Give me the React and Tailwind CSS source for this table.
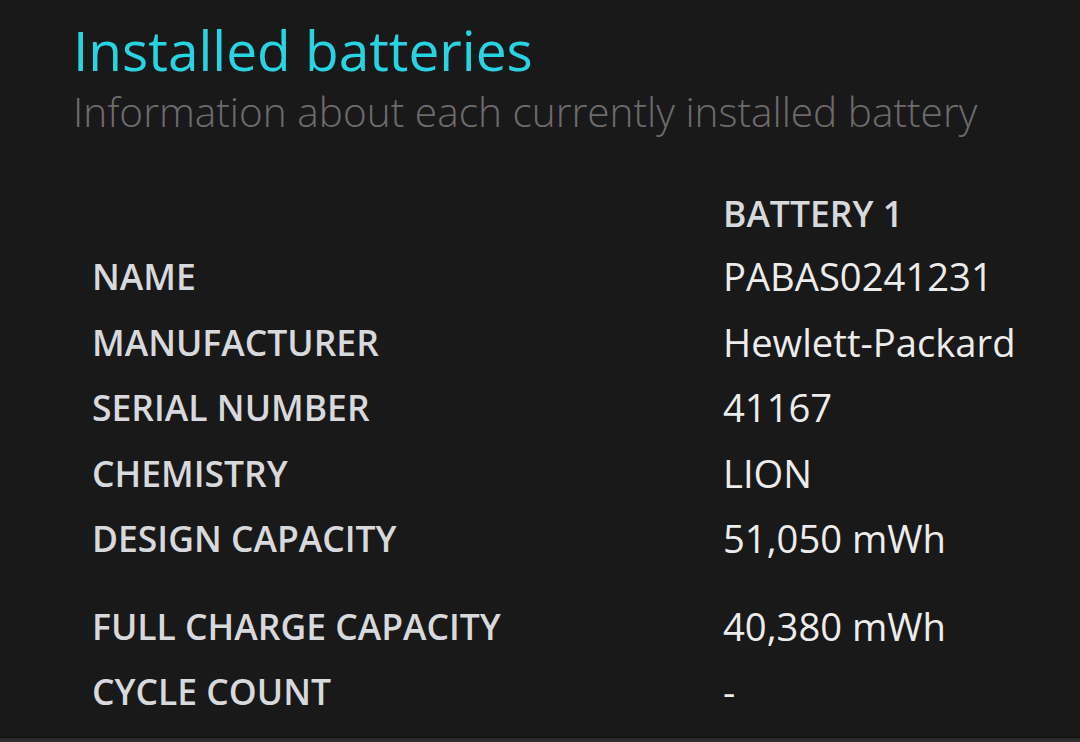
export default function App() {
  const rows = [
    ["NAME", "PABAS0241231", ""],
    ["MANUFACTURER", "Hewlett-Packard", ""],
    ["SERIAL NUMBER", "41167", ""],
    ["CHEMISTRY", "LION", ""],
    ["DESIGN CAPACITY", "51,050 mWh", ""],
    ["FULL CHARGE CAPACITY", "40,380 mWh", "mt-[22px]"],
    ["CYCLE COUNT", "-", ""],
  ];
  return (
    <div className="w-[1080px] h-[742px] bg-[#1a191a] overflow-hidden flex flex-col" style={{ fontFamily: '"Open Sans", "Noto Sans", sans-serif' }}>
      <div className="flex-1 pl-[73px] pt-[20px]">
        <h1 className="text-[55px] leading-[60px] text-[#28d4e2] font-medium whitespace-nowrap">Installed batteries</h1>
        <p className="text-[40.6px] leading-[50px] text-[#6c6c6c] font-light mt-[7px] whitespace-nowrap">Information about each currently installed battery</p>
        <div className="grid grid-cols-[631px_1fr] pl-[19px] mt-[45px]">
          <div></div>
          <div className="text-[35.5px] leading-[62px] font-semibold text-[#d8d9dc]">BATTERY 1</div>
          {rows.map(([k, v, extra]) => (
            <div key={k} className="contents">
              <div className={"text-[35.5px] leading-[65.5px] font-semibold text-[#d8d9dc] whitespace-nowrap " + extra}>{k}</div>
              <div className={"text-[38.2px] leading-[65.5px] text-[#ececec] whitespace-nowrap " + extra}>{v}</div>
            </div>
          ))}
        </div>
      </div>
      <div className="h-[1px] bg-[#0e0e0e]"></div>
      <div className="h-[4px] bg-[#2c2c2c]"></div>
    </div>
  );
}
